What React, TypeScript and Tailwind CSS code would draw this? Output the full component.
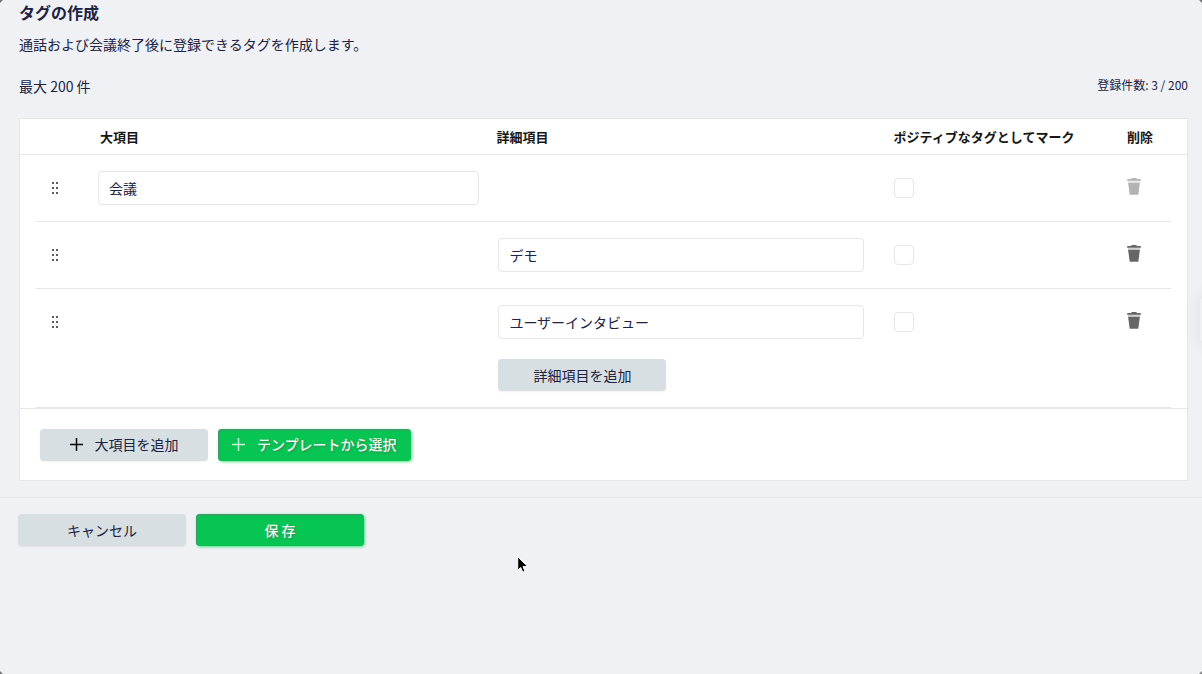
import type { ReactNode } from "react";

function DragHandle() {
  return (
    <svg width="6" height="12" viewBox="0 0 6 12" fill="#5c5c5c" shapeRendering="crispEdges">
      {[0, 5, 10].map((y) => (
        <g key={y}>
          <rect x="0" y={y} width="2" height="2" />
          <rect x="4" y={y} width="2" height="2" />
        </g>
      ))}
    </svg>
  );
}

function Trash({ disabled = false }: { disabled?: boolean }) {
  return (
    <svg width="14" height="17" viewBox="0 0 14 17" fill={disabled ? "#b3b3b3" : "#666666"}>
      <path d="M4.8 0h4.4l.8.9h3.8v1.8H.2V.9H4z" />
      <path d="M1.1 4.7h11.8l-1.6 12H2.7z" />
      <path d="M1 2.7h12v2H1z" opacity=".3" />
    </svg>
  );
}

function Plus({ color }: { color: string }) {
  return (
    <svg width="13" height="13" viewBox="0 0 13 13" stroke={color} strokeWidth="1.5">
      <path d="M6.5 0v13M0 6.5h13" />
    </svg>
  );
}

function Field({ value }: { value: string }) {
  return (
    <div className="flex h-[34px] items-center rounded-[4px] border border-[#e6e6e9] bg-white pb-px pl-[10px] text-[14px] leading-[20px] text-[#20223f]">
      {value}
    </div>
  );
}

function GrayButton({ children }: { children: ReactNode }) {
  return (
    <button className="flex h-8 w-[168px] items-center justify-center rounded-[4px] bg-[#d7dfe2] text-[14px] leading-[20px] text-[#20223f] shadow-[0_1px_2px_rgba(0,0,0,0.06)]">
      {children}
    </button>
  );
}

function GreenButton({ children, className }: { children: ReactNode; className: string }) {
  return (
    <button
      className={
        "flex h-8 items-center justify-center rounded-[4px] bg-[#06c553] text-[14px] leading-[20px] font-medium text-[#e9fbf0] shadow-[inset_1px_1px_2px_rgba(130,110,130,0.75),1px_1px_3px_rgba(6,225,90,0.75)] [text-shadow:1px_1px_2px_rgba(90,110,90,0.8)] " +
        className
      }
    >
      {children}
    </button>
  );
}

type RowProps = { group?: string; detail?: string; last?: boolean };

function Row({ group, detail, last = false }: RowProps) {
  return (
    <div
      className={
        "mx-4 grid grid-cols-[62px_400.4px_396px_230.6px_1fr] border-b border-[#e6e6e6] pt-4 " +
        (last ? "h-[119px]" : "h-[67px]")
      }
    >
      <div className="flex h-[34px] items-center pl-4">
        <DragHandle />
      </div>
      <div className="w-[380.5px]">{group && <Field value={group} />}</div>
      <div>
        <div className="w-[366px]">{detail && <Field value={detail} />}</div>
        {last && (
          <div className="mt-5">
            <GrayButton>
              <span className="-mt-px">詳細項目を追加</span>
            </GrayButton>
          </div>
        )}
      </div>
      <div className="flex h-[34px] items-center">
        <div className="h-5 w-5 rounded-[4px] border border-[#e6e6ec] bg-white" />
      </div>
      <div className="flex h-[34px] pl-[2.5px] pt-[7px]">
        <Trash disabled={!detail} />
      </div>
    </div>
  );
}

export default function App() {
  return (
    <div className="relative h-[674px] w-[1202px] overflow-hidden bg-[#f0f1f5] font-['Noto_Sans_CJK_JP',sans-serif] text-[#20223f]">
      <header className="h-[118px] pl-[19px] pr-[14px]">
        <h1 className="text-[16px] leading-[24px] font-bold">タグの作成</h1>
        <p className="mt-[10px] text-[14px] leading-[20px]">通話および会議終了後に登録できるタグを作成します。</p>
        <div className="mt-[21px] flex justify-between">
          <span className="pt-px text-[14px] leading-[20px]">最大 200 件</span>
          <span className="text-[12px] leading-[20px]">登録件数: 3 / 200</span>
        </div>
      </header>

      <main className="ml-[19px] h-[363px] w-[1169px] border border-[#e6e6e8] bg-white">
        <div className="grid h-[36px] grid-cols-[80px_396.6px_397px_233.4px_1fr] border-b border-[#e6e6e6] text-[13px] leading-[35px] font-bold text-[#161616]">
          <span />
          <span>大項目</span>
          <span>詳細項目</span>
          <span>ポジティブなタグとしてマーク</span>
          <span>削除</span>
        </div>
        <Row group="会議" />
        <Row detail="デモ" />
        <Row detail="ユーザーインタビュー" last />
        <div className="flex gap-[10px] border-t border-[#e6e6e6] px-5 pt-[19.5px]">
          <GrayButton>
            <Plus color="#000000" />
            <span className="ml-3 -mt-px">大項目を追加</span>
          </GrayButton>
          <GreenButton className="w-[192.5px]">
            <Plus color="#c4f5d7" />
            <span className="ml-3 -mt-px">テンプレートから選択</span>
          </GreenButton>
        </div>
      </main>

      <footer className="mt-4 flex gap-[10px] border-t border-[#e4e6e9] pl-[18px] pt-4">
        <GrayButton>キャンセル</GrayButton>
        <GreenButton className="w-[168px]">保 存</GreenButton>
      </footer>

      <div className="absolute -right-[18px] top-[298px] h-[44px] w-[20px] rounded-[4px] shadow-[0_0_14px_4px_rgba(0,0,0,0.05)]" />

      <svg className="absolute left-0 top-0" width="1202" height="674" viewBox="0 0 1202 674" fill="#77787c">
        <path d="M0 0h3L0 3zM1202 0h-3l3 3zM0 674v-3l3 3zM1202 674v-3l-3 3z" />
      </svg>

      <svg className="absolute left-[517px] top-[556px]" width="12" height="18" viewBox="0 0 12 18">
        <path d="M.7.8v13.4l3-2.7 2 4.7 2.3-1-2-4.6h4.8z" fill="#000" stroke="#fff" strokeWidth="1" />
      </svg>
    </div>
  );
}
